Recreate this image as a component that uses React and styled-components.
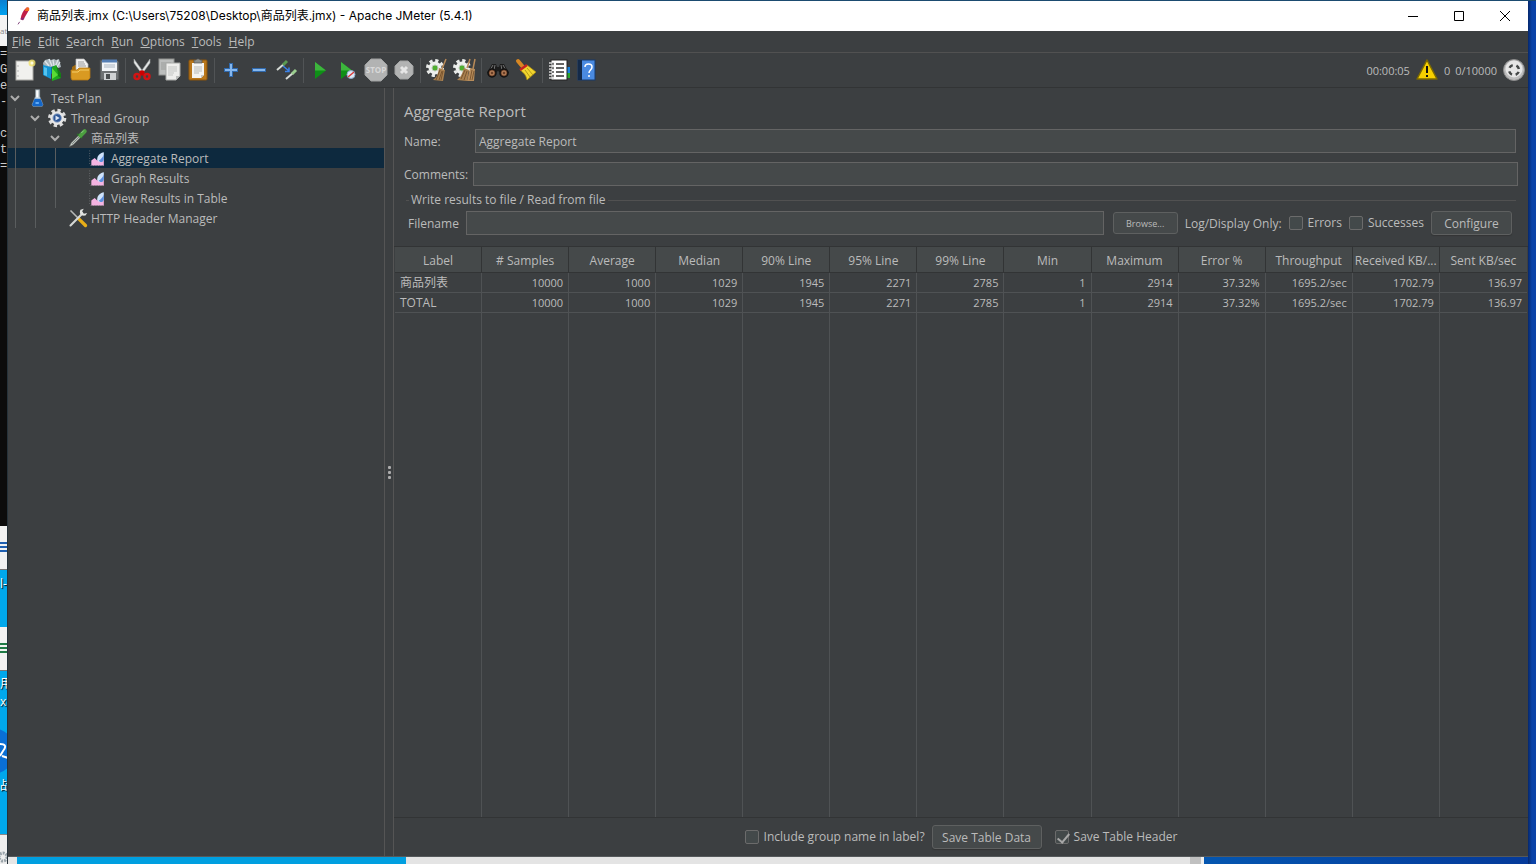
import React from 'react';
import styled, { createGlobalStyle, css } from 'styled-components';

const GlobalStyle = createGlobalStyle`
    * {
        box-sizing: border-box;
    }
    body {
        margin: 0;
        overflow: hidden;
        font-family: "Open Sans", "Noto Sans CJK SC", sans-serif;
        font-size: 12px;
        color: #bbbbbb;
        background: #0a3f9c;
    }
    button, input {
        font: inherit;
        color: inherit;
    }
`

/* ---------- desktop behind the window ---------- */

const Desktop = styled.div`
    display: grid;
    grid-template-columns: 8px minmax(0, 1fr) 8px;
    grid-template-rows: 1px minmax(0, 1fr) 8px;
    height: 100vh;
    background: linear-gradient(90deg, #00a2e8 30%, #0a3f9c 100%);
`

const TopEdge = styled.div`
    grid-column: 2 / 4;
    background: #1b4b70;
`

const LeftEdge = styled.div`
    grid-row: 1 / 4;
    display: flex;
    flex-direction: column;
    overflow: hidden;
    background: #00a8ec;
    border-right: 1px solid #26323a;
`

const EdgeBlue = styled.div`
    height: 15px;
    background: linear-gradient(#0a7fd0, #00a2f0);
`

const EdgeTab = styled.div`
    height: 31px;
    background: #f4f4f4;
    color: #8a8a8a;
    font-size: 8px;
    line-height: 32px;
`

const Terminal = styled.div`
    height: 480px;
    background: #0c0c0c;
    color: #cccccc;
    font: 12px/16px "Liberation Mono", monospace;
    white-space: pre;
    overflow: hidden;
`

const FileIcon = styled.div`
    height: 44px;
    flex: none;
    margin-top: ${p => p.$gap}px;
    padding-top: 16px;
    background: #f2f2f2;
    border-bottom: 1px solid #777777;

    &::before {
        content: "";
        display: block;
        height: 11px;
        background: repeating-linear-gradient(${p => p.$color} 0 2px, #f2f2f2 2px 4px);
    }
`

const FileName = styled.div`
    flex: none;
    height: 18px;
    margin-top: ${p => p.$gap || 0}px;
    line-height: 18px;
    color: #ffffff;
    text-shadow: 1px 1px 1px #000000;
    white-space: nowrap;
`

const AppBall = styled.svg`
    display: block;
    flex: none;
    width: 8px;
    height: 48px;
    margin-top: 16px;
`

const EdgeFoot = styled.div`
    display: flex;
    align-items: flex-end;
    margin-top: auto;
    height: 30px;
    background: #eeeeee;
    border-top: 1px solid #888888;
`

const RightEdge = styled.div`
    grid-row: 2 / 4;
    grid-column: 3;
    background: linear-gradient(90deg, #06286c, #0a42a8 50%);
`

const BottomEdge = styled.div`
    grid-row: 3;
    grid-column: 2;
    display: flex;
    border-top: 1px solid #55595b;
`

const Strip = styled.div`
    flex: ${p => p.$size} 0 0;
    background: ${p => p.$color};
`

/* ---------- window ---------- */

const Window = styled.div`
    grid-column: 2;
    grid-row: 2;
    display: flex;
    flex-direction: column;
    min-height: 0;
    background: #3c3f41;
`

const TitleBar = styled.header`
    display: flex;
    align-items: center;
    flex: none;
    height: 30px;
    padding-left: 5px;
    background: #ffffff;
    color: #000000;
`

const WindowTitle = styled.h1`
    flex: 1;
    margin: 0 0 0 4px;
    font-family: Inter, "Noto Sans CJK SC", sans-serif;
    font-size: 12px;
    font-weight: 400;
    line-height: 20px;
`

const WindowButton = styled.button`
    display: flex;
    align-items: center;
    justify-content: center;
    width: 46px;
    height: 30px;
    padding: 0;
    border: 0;
    background: none;
`

const MenuBar = styled.nav`
    display: flex;
    flex: none;
    height: 22px;
    padding-left: 1px;
    border-bottom: 1px solid #515151;
`

const MenuItem = styled.button`
    padding: 0 4px 0 3px;
    border: 0;
    background: none;
    line-height: 20px;

    &::first-letter {
        text-decoration: underline;
    }
`

const Toolbar = styled.div`
    display: flex;
    align-items: center;
    flex: none;
    height: 35px;
    padding: 0 2px 0 3px;
    border-bottom: 1px solid #323435;
`

const ToolButton = styled.button`
    display: flex;
    align-items: center;
    justify-content: center;
    width: 28px;
    height: 28px;
    padding: 0;
    border: 0;
    background: none;
`

const ToolSeparator = styled.div`
    width: 1px;
    height: 25px;
    margin: 0 2px;
    background: #515456;
`

const Status = styled.div`
    display: flex;
    align-items: center;
    gap: 5px;
    margin-left: auto;
    font-size: 11px;
`

const Body = styled.div`
    display: flex;
    flex: 1;
    min-height: 0;
`

/* ---------- tree ---------- */

const TreePane = styled.ul`
    flex: none;
    width: 376px;
    margin: 0;
    padding: 0;
    list-style: none;
`

const TreeRow = styled.li`
    display: flex;
    align-items: center;
    height: 20px;
    background: ${p => p.$selected ? '#0d293e' : 'transparent'};
`

const Guide = styled.span`
    width: 20px;
    height: 20px;
    background: linear-gradient(#5a5d5e, #5a5d5e) 7px 0 / 1px 100% no-repeat;
`

const Toggle = styled.span`
    display: flex;
    align-items: center;
    width: 20px;
    height: 20px;
`

const TreeLabel = styled.span`
    margin-left: 3px;
    padding-top: 2px;
    line-height: 18px;
`

const Divider = styled.div`
    display: flex;
    flex: none;
    flex-direction: column;
    align-items: center;
    justify-content: center;
    gap: 2px;
    width: 10px;
    border: solid #555555;
    border-width: 0 1px;
`

const Dot = styled.i`
    width: 3px;
    height: 3px;
    border-radius: 1px;
    background: #adadad;
`

/* ---------- report ---------- */

const Report = styled.main`
    display: flex;
    flex: 1;
    flex-direction: column;
    min-width: 0;
`

const ReportTitle = styled.h2`
    margin: 12px 10px 7px;
    font-size: 15px;
    font-weight: 400;
    line-height: 22px;
`

const Field = styled.div`
    display: flex;
    align-items: center;
    margin: 0 ${p => p.$right}px ${p => p.$gap}px 10px;
`

const FieldLabel = styled.label`
    width: ${p => p.$width}px;
    padding-top: 2px;
    line-height: 22px;
`

const TextInput = styled.input`
    flex: 1;
    min-width: 0;
    height: 24px;
    padding: 0 3px;
    border: 1px solid #646464;
    background: #45494a;
    outline: none;
`

const FileGroup = styled.fieldset`
    margin: 0 12px 11px;
    padding: 3px 4px 0 2px;
    border: 0;
    border-top: 1px solid #515151;
    min-width: 0;

    legend {
        margin-left: 1px;
        padding: 0 2px;
        line-height: 16px;
    }
`

const FileRow = styled.div`
    display: flex;
    align-items: center;
    gap: 7px;
`

const Button = styled.button`
    height: 24px;
    min-width: ${p => p.$width}px;
    padding: 2px 0 0;
    border: 1px solid #5e6060;
    border-radius: 3px;
    background: #45494a;
    box-shadow: 0 1px 1px #333536;
    line-height: 20px;
    white-space: nowrap;

    ${p => p.$small && css`
        height: 22px;
        margin-left: 2px;
        font-size: 9px;
        line-height: 18px;
        box-shadow: none;
    `}
`

const Check = styled.label`
    display: flex;
    align-items: center;
    gap: 5px;
    margin-left: ${p => p.$left || 0}px;
    line-height: 20px;
    white-space: nowrap;

    input {
        position: relative;
        appearance: none;
        width: 14px;
        height: 14px;
        margin: 0;
        border: 1px solid #6b6b6b;
        border-radius: 2px;
        background: #43494a;
    }
    input:checked::after {
        content: "";
        position: absolute;
        left: 4px;
        top: 0;
        width: 5px;
        height: 10px;
        border: solid #a7a7a7;
        border-width: 0 2px 2px 0;
        transform: rotate(40deg);
    }
`

const TableArea = styled.div`
    flex: 1;
    min-height: 0;
    padding: 0 1px;
    border-top: 1px solid #323435;
    border-bottom: 1px solid #323435;
`

const Table = styled.table`
    width: 100%;
    height: 100%;
    table-layout: fixed;
    border-collapse: separate;
    border-spacing: 0;

    th, td {
        white-space: nowrap;
        border-right: 1px solid #4f5254;
    }
    th {
        height: 26px;
        padding: 2px 0 0;
        border-color: #323435;
        border-bottom: 1px solid #323435;
        background: #45494a;
        font-weight: 400;
        line-height: 22px;
    }
    td {
        height: 20px;
        padding: 0 5px;
        border-bottom: 1px solid #4f5254;
        font-size: 11px;
        line-height: 19px;
        text-align: right;
    }
    td:first-child {
        font-size: 12px;
        text-align: left;
    }
    th:last-child, td:last-child {
        border-right: 0;
    }
`

const FillerRow = styled.tr`
    height: 100%;

    && td {
        border-bottom: 0;
    }
`

const Footer = styled.footer`
    display: flex;
    align-items: center;
    justify-content: center;
    gap: 7px;
    flex: none;
    height: 38px;
`

/* ---------- icons ---------- */

const Icon = ({ size = 24, children }) => (
    <svg width={size} height={size} viewBox="0 0 24 24" fill="none" aria-hidden="true">
        {children}
    </svg>
)

const NewIcon = () => (
    <Icon>
        <rect x="3" y="3" width="17" height="19" fill="#f1f1ee" stroke="#a9a9a5" />
        <path d="M5 7v2M5 12v2M5 17v2" stroke="#b9b9b9" />
        <circle cx="19" cy="5" r="3.5" fill="#f4e36a" opacity=".8" />
        <circle cx="19" cy="5" r="1.5" fill="#fffce0" />
    </Icon>
)

const TemplatesIcon = () => (
    <Icon>
        <path d="M2 5l2-3 4-1 2 1 3-1 2 1 3-1 2 8-8 3-9-2z" fill="#aab6bc" />
        <path d="M4 3l4 5M8 1l3 7M12 2l1 6M17 2l-3 7M19 4l-3 5" stroke="#dfe7ea" strokeWidth="1.3" />
        <path d="M2 7l8 2v12l-8-4z" fill="#1494d2" />
        <path d="M3 9l3 1v8l-3-1z" fill="#55c4f0" />
        <path d="M10 9l3-1v6l-3 2z" fill="#0a6ca3" />
        <path d="M11 9l4-2 5 9v4l-9 3z" fill="#1fa81f" />
        <path d="M11 10l6 7-6 4z" fill="#59dc35" />
        <path d="M15 7l5 9v4l-3-2v-3z" fill="#147c14" />
    </Icon>
)

const OpenIcon = () => (
    <Icon>
        <path d="M3 9l3-2h13v13H3z" fill="#a56d10" />
        <path d="M7 1h8l4 5v9H7z" fill="#f2f2f2" stroke="#bbbbbb" strokeWidth=".7" />
        <path d="M9 4h6M9 6h7M9 8h8" stroke="#999999" />
        <path d="M2 12h6l2-2h11v10l-2 2H3l-1-2z" fill="#d99a22" stroke="#b67911" strokeWidth=".8" />
        <path d="M3 14h6l2-2h9" stroke="#f4cc66" />
    </Icon>
)

const SaveIcon = () => (
    <Icon>
        <path d="M3 2h17l2 2v18H3z" fill="#6d7173" stroke="#44484a" />
        <rect x="5" y="2" width="15" height="11" fill="#f2f5f8" />
        <path d="M5 3h15" stroke="#557fb5" strokeWidth="3" />
        <path d="M7 7h11M7 9h11" stroke="#aab5c1" />
        <rect x="7" y="15" width="12" height="7" fill="#cfd2d4" />
        <rect x="9" y="16" width="4" height="5" fill="#4a4e50" />
    </Icon>
)

const CutIcon = () => (
    <Icon>
        <path d="M4 1l10 14-2 1L4 5zM20 1L10 15l2 1 8-11z" fill="#e5e7e7" stroke="#9b9f9f" strokeWidth=".6" />
        <path d="M10 13l4 4M14 13l-4 4" stroke="#cc0000" strokeWidth="3" />
        <circle cx="7" cy="18.5" r="2.5" stroke="#d01414" strokeWidth="2.5" />
        <circle cx="17" cy="18.5" r="2.5" stroke="#d01414" strokeWidth="2.5" />
    </Icon>
)

const CopyIcon = () => (
    <Icon>
        <rect x="1" y="1" width="15" height="16" fill="#bcbebd" stroke="#929492" />
        <path d="M3 5h10M3 7h10M3 9h10M3 11h8" stroke="#9b9d9b" />
        <path d="M8 5h14v13l-4 4H8z" fill="#eeeeec" stroke="#a7a9a7" />
        <path d="M10 9h9M10 11h9M10 13h9M10 15h6M10 17h5" stroke="#c3c5c3" />
        <path d="M22 18h-4v4z" fill="#bcbebc" />
    </Icon>
)

const PasteIcon = () => (
    <Icon>
        <rect x="3" y="2" width="18" height="20" rx="1" fill="#b9771b" stroke="#8a540d" />
        <path d="M6 5h12v12l-3 3H6z" fill="#f4f4f2" />
        <path d="M8 9h8M8 11h8M8 13h8M8 15h5" stroke="#b7b9b7" />
        <path d="M8 2h2l1-1h2l1 1h2v3H8z" fill="#8b8e8b" stroke="#555555" strokeWidth=".7" />
        <path d="M18 17h-3v3z" fill="#c5c7c5" />
    </Icon>
)

const PlusIcon = () => (
    <Icon>
        <path d="M12 5v14M5 12h14" stroke="#3069ac" strokeWidth="4" />
        <path d="M12 6v12M6 12h12" stroke="#86b7ed" strokeWidth="2" />
    </Icon>
)

const MinusIcon = () => (
    <Icon>
        <path d="M5 12h14" stroke="#3069ac" strokeWidth="4" />
        <path d="M6 12h12" stroke="#86b7ed" strokeWidth="2" />
    </Icon>
)

const ToggleIcon = () => (
    <Icon>
        <path d="M2 12l7-6" stroke="#d7dcd7" strokeWidth="2" />
        <path d="M8 7l4-4" stroke="#5b9a52" strokeWidth="3" />
        <path d="M11 21l7-6" stroke="#d7dcd7" strokeWidth="2" />
        <path d="M17 16l4-4" stroke="#9bce8f" strokeWidth="3" />
        <path d="M8 8l6 5M14 9.500v4h-4" stroke="#3b82e8" strokeWidth="1.500" />
    </Icon>
)

const PlayIcon = () => (
    <Icon>
        <path d="M7 4l11 8.500L7 21z" fill="#0f8f17" />
        <path d="M7 4l11 8.500H7z" fill="#3db53d" />
    </Icon>
)

const PlayNoTimersIcon = () => (
    <Icon>
        <path d="M5 4l11 8.500L5 21z" fill="#0f8f17" />
        <path d="M5 4l11 8.500H5z" fill="#3db53d" />
        <circle cx="15" cy="16.500" r="4" fill="#dce8f4" stroke="#8aa8c9" />
        <path d="M12 19l6-5" stroke="#d83a3a" strokeWidth="1.500" />
    </Icon>
)

const StopIcon = () => (
    <Icon>
        <path d="M7 1h10l6 6v10l-6 6H7l-6-6V7z" fill="#b2b3b3" stroke="#a0a2a2" />
        <text x="12" y="15" fill="#d8d8d8" fontSize="8" fontWeight="700" textAnchor="middle">STOP</text>
    </Icon>
)

const ShutdownIcon = () => (
    <Icon>
        <path d="M8 3h8l5 5v8l-5 5H8l-5-5V8z" fill="#b2b3b3" stroke="#a0a2a2" />
        <path d="M9 9l6 6M15 9l-6 6" stroke="#e6e6e6" strokeWidth="3" />
    </Icon>
)

const Gear = ({ cx, cy }) => (
    <>
        <circle cx={cx} cy={cy} r="7.500" stroke="#e9ebe9" strokeWidth="3" strokeDasharray="3.200 2.690" />
        <circle cx={cx} cy={cy} r="6.500" fill="#eef0ee" />
        <circle cx={cx} cy={cy} r="3" fill="#4fae30" stroke="#b9c8b4" />
    </>
)

const ClearIcon = () => (
    <Icon>
        <Gear cx={10} cy={10} />
        <path d="M21 1l-4 10" stroke="#b88a58" strokeWidth="1.500" />
        <path d="M14 10l6 2-2 11-10-1c4-3 5-6 6-12z" fill="#a9804f" />
        <path d="M15 12l-4 10M17 13l-3 9M18 13l-2 9" stroke="#6d4a26" strokeWidth=".8" />
    </Icon>
)

const ClearAllIcon = () => (
    <Icon>
        <Gear cx={9} cy={10} />
        <path d="M17 1l-3 9M22 1l-2 10" stroke="#b88a58" strokeWidth="1.500" />
        <path d="M11 10l5 2-2 11-10-1c4-3 5-6 7-12z" fill="#a9804f" />
        <path d="M17 10l5 1-1 12h-7z" fill="#b78c5b" />
        <path d="M12 12L8 21M14 13l-3 9M19 12l-2 10M21 13l-2 9" stroke="#6d4a26" strokeWidth=".8" />
    </Icon>
)

const SearchIcon = () => (
    <Icon>
        <path d="M1 15l5-9h4l1 3h2l1-3h4l5 9-6 1-5-3-5 3z" fill="#1c1c1c" />
        <path d="M7 7l-4 7M9 7l-1 5M17 7l4 7M15 7l1 5" stroke="#8a8a8a" strokeWidth=".8" />
        <circle cx="6" cy="15" r="4" fill="#6b4028" stroke="#111111" strokeWidth="1.500" />
        <circle cx="18" cy="15" r="4" fill="#6b4028" stroke="#111111" strokeWidth="1.500" />
        <circle cx="6" cy="15" r="2" stroke="#c58d63" />
        <circle cx="18" cy="15" r="2" stroke="#c58d63" />
    </Icon>
)

const BroomIcon = () => (
    <Icon>
        <path d="M4 3l5 6" stroke="#d88723" strokeWidth="4" strokeLinecap="round" />
        <path d="M6 12l7-5 9 7-9 8c-1-5-3-7-7-10z" fill="#f2d52e" stroke="#a98b0c" strokeWidth=".7" />
        <path d="M6 12l7-5" stroke="#c62323" strokeWidth="2.500" />
        <path d="M11 12l5 7M13 10l6 7" stroke="#b59a18" />
    </Icon>
)

const ListIcon = () => (
    <Icon>
        <path d="M18 9h5v6h-5z" fill="#1782e0" />
        <path d="M18 15h5v5h-5z" fill="#28a52b" />
        <rect x="4" y="2" width="16" height="20" fill="#ffffff" stroke="#222222" />
        <path d="M9 6h8M9 10h8M9 14h8M9 18h8" stroke="#333333" strokeWidth="1.500" />
        <path d="M2 5h5M2 8h5M2 11h5M2 14h5M2 17h5M2 20h5" stroke="#d7d7d7" strokeWidth="1.500" />
        <path d="M5 6h2M5 10h2M5 14h2M5 18h2" stroke="#111111" />
    </Icon>
)

const HelpIcon = () => (
    <Icon>
        <rect x="3" y="2" width="17" height="20" fill="#4a8ae0" stroke="#173b6d" />
        <rect x="3" y="2" width="4" height="20" fill="#142a49" />
        <path d="M10 9c0-4 7-4 7 0 0 3-3 3-3 6M14 17v2" stroke="#ffffff" strokeWidth="1.500" />
    </Icon>
)

const WarningIcon = () => (
    <Icon>
        <path d="M12 2L2 21h20z" fill="#f7d000" stroke="#7c6900" strokeWidth="1.500" strokeLinejoin="round" />
        <path d="M12 8v7M12 17v2" stroke="#111111" strokeWidth="2" />
    </Icon>
)

const RunnerIcon = () => (
    <Icon>
        <circle cx="12" cy="12" r="10.500" fill="#bdbdbd" stroke="#8b8b8b" />
        <circle cx="12" cy="11" r="8.500" fill="#e6e6e6" />
        <circle cx="12" cy="12" r="5" stroke="#444747" strokeWidth="2.500" strokeDasharray="4 3.850" strokeDashoffset="-1.930" />
    </Icon>
)

const FeatherIcon = () => (
    <Icon size={20}>
        <path d="M16 2c4-1 4 1 2 5l-6 10-3-1c1-6 3-11 7-14z" fill="#c01f48" />
        <path d="M16 2c4-1 4 1 3 4l-5 0z" fill="#ef6a22" />
        <path d="M10 14l4 0-2 3-3-1z" fill="#8a2a72" />
        <path d="M6 22l2-3" stroke="#6b2265" />
    </Icon>
)

const FlaskIcon = () => (
    <Icon size={20}>
        <path d="M9 2h5v8l4 10-1 2H6l-1-2 4-10z" fill="#cfd8de" stroke="#8b979e" strokeWidth=".8" />
        <path d="M8 13h7l3 7-1 2H6l-1-2z" fill="#1467c9" />
        <path d="M9 18h4" stroke="#71b9ff" strokeWidth="2" />
        <path d="M11 3v8" stroke="#ffffff" strokeWidth="2" />
    </Icon>
)

const ThreadIcon = () => (
    <Icon size={20}>
        <circle cx="11" cy="12" r="9" stroke="#dddddd" strokeWidth="4" strokeDasharray="4 3.070" />
        <circle cx="11" cy="12" r="6.500" fill="#2b5596" stroke="#e6e6e6" strokeWidth="3.500" />
        <circle cx="11" cy="12" r="5" stroke="#6f8cb8" />
        <path d="M9 9l5 3-5 3z" fill="#dbe6f7" />
    </Icon>
)

const SamplerIcon = () => (
    <Icon size={20}>
        <path d="M2 22l2-4L14 8l2 2L6 20z" fill="#d3d8d4" stroke="#8c928d" strokeWidth=".8" />
        <path d="M5 19l9-9" stroke="#6c766f" />
        <path d="M11 7l6 5" stroke="#2d6e28" strokeWidth="2" />
        <path d="M15 9l5-5" stroke="#4c9f40" strokeWidth="5" strokeLinecap="round" />
        <path d="M16 6l3-3" stroke="#a5d79b" />
    </Icon>
)

const GraphIcon = () => (
    <Icon size={20}>
        <path d="M2 3v18M3 21h17" stroke="#77797b" strokeDasharray="1 2" />
        <path d="M4 21v-6l4-3 3 3 3-3 5 1v8z" fill="#f4b3e2" />
        <path d="M11 14c0-6 4-8 8-9v9c-2 4-6 4-8 0z" fill="#cfe3fb" />
        <path d="M13 15c2-1 4-3 6-7v6c-1 3-4 4-6 1z" fill="#5d8fdd" />
    </Icon>
)

const ToolsIcon = () => (
    <Icon size={20}>
        <path d="M3 3l9 9" stroke="#b7b9b7" strokeWidth="2" />
        <path d="M13 13l8 8" stroke="#e8ae18" strokeWidth="4" strokeLinecap="round" />
        <path d="M3 21L17 7" stroke="#d6d8d6" strokeWidth="2.500" strokeLinecap="round" />
        <path d="M15 2c-2 4 0 8 6 7l2-3-4 1-2-3 2-3z" fill="#e3e5e3" />
    </Icon>
)

const Chevron = () => (
    <svg width="15" height="10" viewBox="0 0 15 10" fill="none" aria-hidden="true">
        <path d="M3 3l4 4 4-4" stroke="#adadad" strokeWidth="2" />
    </svg>
)

/* ---------- data ---------- */

const menus = ['File', 'Edit', 'Search', 'Run', 'Options', 'Tools', 'Help']

const toolGroups = [
    [['New', NewIcon], ['Templates', TemplatesIcon], ['Open', OpenIcon], ['Save', SaveIcon]],
    [['Cut', CutIcon], ['Copy', CopyIcon], ['Paste', PasteIcon]],
    [['Expand All', PlusIcon], ['Collapse All', MinusIcon], ['Toggle', ToggleIcon]],
    [['Start', PlayIcon], ['Start no pauses', PlayNoTimersIcon], ['Stop', StopIcon], ['Shutdown', ShutdownIcon]],
    [['Clear', ClearIcon], ['Clear All', ClearAllIcon]],
    [['Search', SearchIcon], ['Reset Search', BroomIcon]],
    [['Function Helper', ListIcon], ['Help', HelpIcon]],
]

const tree = [
    { label: 'Test Plan', depth: 0, icon: FlaskIcon, open: true },
    { label: 'Thread Group', depth: 1, icon: ThreadIcon, open: true },
    { label: '商品列表', depth: 2, icon: SamplerIcon, open: true },
    { label: 'Aggregate Report', depth: 3, icon: GraphIcon, selected: true },
    { label: 'Graph Results', depth: 3, icon: GraphIcon },
    { label: 'View Results in Table', depth: 3, icon: GraphIcon },
    { label: 'HTTP Header Manager', depth: 2, icon: ToolsIcon },
]

const columns = [
    'Label', '# Samples', 'Average', 'Median', '90% Line', '95% Line', '99% Line',
    'Min', 'Maximum', 'Error %', 'Throughput', 'Received KB/...', 'Sent KB/sec',
]

const values = ['10000', '1000', '1029', '1945', '2271', '2785', '1', '2914', '37.32%', '1695.2/sec', '1702.79', '136.97']

const rows = [
    ['商品列表', ...values],
    ['TOTAL', ...values],
]

const App = () => (
    <Desktop>
        <GlobalStyle />
        <LeftEdge>
            <EdgeBlue />
            <EdgeTab>at</EdgeTab>
            <Terminal>{'=\nG\ne\n-\n\nc\nt\n='}</Terminal>
            <FileIcon $gap={0} $color="#1f5fb0" />
            <FileName $gap={5}>l-c</FileName>
            <FileIcon $gap={34} $color="#1e7a45" />
            <FileName $gap={4}>用</FileName>
            <FileName>x</FileName>
            <AppBall viewBox="0 0 8 48">
                <circle cx="-8" cy="24" r="23" fill="#0a6fd6" />
                <path d="M0 17c5 0 7 2 3 7l-3 5M2 29l6 2" stroke="#ffffff" strokeWidth="2" fill="none" />
            </AppBall>
            <FileName $gap={2}>战</FileName>
            <EdgeFoot>
                <svg width="8" height="16">
                    <circle cx="3" cy="9" r="4" fill="none" stroke="#9aa4aa" strokeWidth="3" strokeDasharray="2 1" />
                </svg>
            </EdgeFoot>
        </LeftEdge>
        <TopEdge />
        <Window>
            <TitleBar>
                <FeatherIcon />
                <WindowTitle>商品列表.jmx (C:\Users\75208\Desktop\商品列表.jmx) - Apache JMeter (5.4.1)</WindowTitle>
                <WindowButton aria-label="Minimize">
                    <svg width="11" height="11"><path d="M0 5.500h10" stroke="#000000" /></svg>
                </WindowButton>
                <WindowButton aria-label="Maximize">
                    <svg width="11" height="11"><path d="M.5.5h9v9h-9z" fill="none" stroke="#000000" /></svg>
                </WindowButton>
                <WindowButton aria-label="Close">
                    <svg width="11" height="11"><path d="M0 0l10 10M10 0L0 10" stroke="#000000" /></svg>
                </WindowButton>
            </TitleBar>
            <MenuBar>
                {menus.map(menu => <MenuItem key={menu}>{menu}</MenuItem>)}
            </MenuBar>
            <Toolbar>
                {toolGroups.map((group, i) => (
                    <React.Fragment key={i}>
                        {i > 0 && <ToolSeparator />}
                        {group.map(([name, ToolIcon]) => (
                            <ToolButton key={name} aria-label={name}><ToolIcon /></ToolButton>
                        ))}
                    </React.Fragment>
                ))}
                <Status>
                    <span>00:00:05</span>
                    <WarningIcon />
                    <span>0</span>
                    <span>0/10000</span>
                    <RunnerIcon />
                </Status>
            </Toolbar>
            <Body>
                <TreePane>
                    {tree.map(({ label, depth, icon: NodeIcon, open, selected }) => (
                        <TreeRow key={label} $selected={selected}>
                            {Array.from({ length: depth }, (_, i) => <Guide key={i} />)}
                            <Toggle>{open && <Chevron />}</Toggle>
                            <NodeIcon />
                            <TreeLabel>{label}</TreeLabel>
                        </TreeRow>
                    ))}
                </TreePane>
                <Divider><Dot /><Dot /><Dot /></Divider>
                <Report>
                    <ReportTitle>Aggregate Report</ReportTitle>
                    <Field $right={12} $gap={9}>
                        <FieldLabel htmlFor="name" $width={71}>Name:</FieldLabel>
                        <TextInput id="name" defaultValue="Aggregate Report" />
                    </Field>
                    <Field $right={10} $gap={6}>
                        <FieldLabel htmlFor="comments" $width={69}>Comments:</FieldLabel>
                        <TextInput id="comments" />
                    </Field>
                    <FileGroup>
                        <legend>Write results to file / Read from file</legend>
                        <FileRow>
                            <label htmlFor="filename">Filename</label>
                            <TextInput id="filename" />
                            <Button $width={65} $small>Browse...</Button>
                            <span>Log/Display Only:</span>
                            <Check><input type="checkbox" />Errors</Check>
                            <Check><input type="checkbox" />Successes</Check>
                            <Button $width={81}>Configure</Button>
                        </FileRow>
                    </FileGroup>
                    <TableArea>
                        <Table>
                            <thead>
                                <tr>{columns.map(column => <th key={column}>{column}</th>)}</tr>
                            </thead>
                            <tbody>
                                {rows.map(row => (
                                    <tr key={row[0]}>
                                        {row.map((value, i) => <td key={i}>{value}</td>)}
                                    </tr>
                                ))}
                                <FillerRow>
                                    {columns.map(column => <td key={column} />)}
                                </FillerRow>
                            </tbody>
                        </Table>
                    </TableArea>
                    <Footer>
                        <Check><input type="checkbox" />Include group name in label?</Check>
                        <Button $width={110}>Save Table Data</Button>
                        <Check $left={6}><input type="checkbox" defaultChecked />Save Table Header</Check>
                    </Footer>
                </Report>
            </Body>
        </Window>
        <RightEdge />
        <BottomEdge>
            <Strip $size={9} $color="#e6e6e6" />
            <Strip $size={389} $color="#009fe0" />
            <Strip $size={784} $color="#e4e4e4" />
            <Strip $size={11} $color="#c0c0c0" />
            <Strip $size={3} $color="#eeeeee" />
            <Strip $size={324} $color="linear-gradient(90deg, #0456b0, #053a9a)" />
        </BottomEdge>
    </Desktop>
)

export default App;
